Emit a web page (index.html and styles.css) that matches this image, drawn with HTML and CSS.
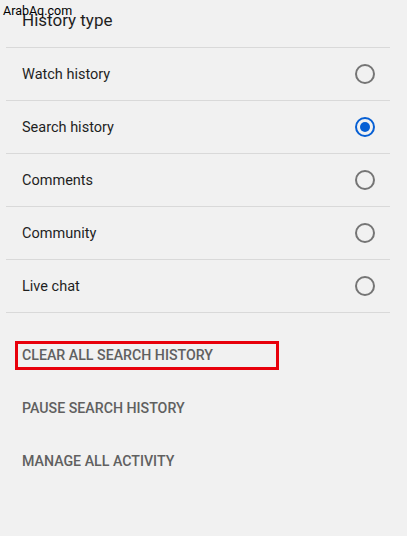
FILE: index.html
```html
<!DOCTYPE html>
<html lang="en">
  <head>
    <meta charset="UTF-8" />
    <meta name="viewport" content="width=device-width, initial-scale=1.0" />
    <title>History type</title>
    <link rel="stylesheet" href="styles.css">
  </head>
  <body>
    <div class="watermark">ArabAq.com</div>
    <div class="panel">
      <h2 class="panel-title">History type</h2>
      <ul class="type-list">
        <li class="type-row">
          <span>Watch history</span>
          <span class="radio"></span>
        </li>
        <li class="type-row">
          <span>Search history</span>
          <span class="radio checked"></span>
        </li>
        <li class="type-row">
          <span>Comments</span>
          <span class="radio"></span>
        </li>
        <li class="type-row">
          <span>Community</span>
          <span class="radio"></span>
        </li>
        <li class="type-row">
          <span>Live chat</span>
          <span class="radio"></span>
        </li>
      </ul>
      <div class="actions">
        <div class="action"><span class="action-label highlight">CLEAR ALL SEARCH HISTORY</span></div>
        <div class="action"><span class="action-label">PAUSE SEARCH HISTORY</span></div>
        <div class="action"><span class="action-label">MANAGE ALL ACTIVITY</span></div>
      </div>
    </div>
  </body>
</html>
```

FILE: styles.css
```css
* {
  box-sizing: border-box;
}

body {
  margin: 0;
  font-family: Roboto, "Liberation Sans", sans-serif;
  background: #f1f1f1;
  min-height: 100vh;
}

.watermark {
  position: absolute;
  top: 3px;
  left: 3px;
  font-family: Roboto, "Liberation Sans", sans-serif;
  font-size: 12.5px;
  color: #000;
}

.panel {
  width: 390px;
  padding-left: 6px;
}

.panel-title {
  margin: 0;
  height: 48px;
  padding: 9px 0 0 16px;
  font-size: 17px;
  font-weight: 400;
  line-height: 22px;
  color: #1f1f1f;
  border-bottom: 1px solid #d9d9d9;
}

.type-list {
  list-style: none;
  margin: 0;
  padding: 0;
}

.type-row {
  display: flex;
  align-items: center;
  justify-content: space-between;
  height: 53px;
  padding: 0 15px 0 16px;
  font-size: 14.5px;
  color: #1f1f1f;
  border-bottom: 1px solid #d9d9d9;
}

.radio {
  width: 20px;
  height: 20px;
  border: 2px solid #757575;
  border-radius: 50%;
  display: flex;
  align-items: center;
  justify-content: center;
}

.radio.checked {
  border-color: #065fd4;
}

.radio.checked::after {
  content: "";
  width: 10px;
  height: 10px;
  border-radius: 50%;
  background: #065fd4;
}

.actions {
  padding-top: 16px;
}

.action {
  height: 53px;
  display: flex;
  align-items: center;
  padding-left: 16px;
}

.action-label {
  font-size: 14.2px;
  font-weight: 500;
  color: #606060;
  line-height: 23px;
}

.highlight {
  display: inline-block;
  width: 264px;
  margin-left: -7px;
  padding-left: 4px;
  border: 3px solid #e8000b;
}
```
